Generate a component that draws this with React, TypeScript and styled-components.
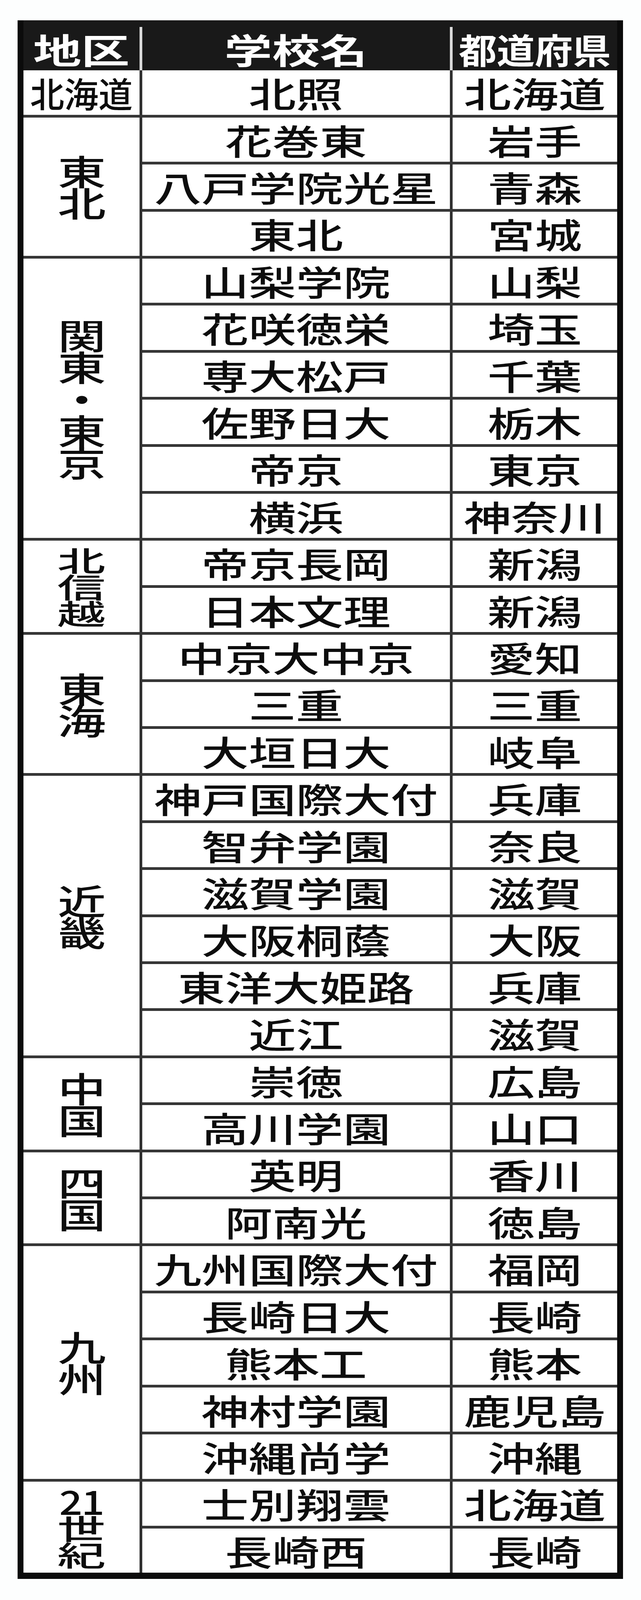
import React from "react";
import styled, { createGlobalStyle } from "styled-components";

const GlobalStyle = createGlobalStyle`
  html, body {
    margin: 0;
    padding: 0;
    background: #fdfefe;
  }
  body {
    font-family: "Noto Sans CJK JP", "Noto Sans", sans-serif;
    color: #0d0d0d;
  }
`;

/* --k is the vertical fit factor: 1 when the window really is 5020px tall,
   smaller when the browser clamps the window height. */
const Page = styled.div`
  width: 1640px;
  height: calc(5020px * var(--k));
  box-sizing: border-box;
  padding: calc(64px * var(--k)) 0 0 45px;
  background: #fdfefe;
  overflow: hidden;
`;

const Table = styled.div`
  width: 1549px;
  box-sizing: border-box;
  border-left: 15px solid #0b0b0b;
  border-right: 15px solid #0b0b0b;
  border-bottom: calc(20px * var(--k)) solid #0b0b0b;
  background: #ffffff;
`;

const Header = styled.div`
  display: grid;
  grid-template-columns: 297px 7px 787px 7px 1fr;
  height: calc(157px * var(--k));
  background: #191919;
`;

const HeaderCell = styled.div`
  display: flex;
  align-items: center;
  justify-content: center;
  padding-top: calc(20px * var(--k));
  color: #ffffff;
  font-weight: 700;
`;

const HeaderDivider = styled.div`
  margin-top: calc(20px * var(--k));
  background: #d9d9d9;
`;

const Text = styled.span<{ $sx: number }>`
  display: inline-block;
  white-space: nowrap;
  font-size: calc(108px * var(--k));
  line-height: 1.2;
  transform: scaleX(calc(${(p) => p.$sx} / var(--k)));
`;

const Region = styled.div<{ $last?: boolean }>`
  display: grid;
  grid-template-columns: 297px 7px 1fr;
  border-bottom: ${(p) =>
    p.$last ? "none" : "calc(9px * var(--k)) solid #363636"};
`;

const RegionCell = styled.div`
  display: flex;
  flex-direction: column;
  align-items: center;
  justify-content: center;
  min-height: 0;
  font-weight: 500;
`;

const VDivider = styled.div`
  background: #303030;
`;

const Rows = styled.div`
  display: flex;
  flex-direction: column;
`;

const Row = styled.div`
  display: grid;
  grid-template-columns: 787px 7px 1fr;
  height: calc(139px * var(--k));
  & + & {
    border-top: calc(9px * var(--k)) solid #363636;
  }
`;

const Cell = styled.div`
  display: flex;
  align-items: center;
  justify-content: center;
  font-weight: 500;
`;

const VLabel = styled.div<{ $squeeze?: boolean }>`
  writing-mode: vertical-rl;
  text-orientation: upright;
  white-space: nowrap;
  font-size: calc(${(p) => (p.$squeeze ? 88 : 108)}px * var(--k));
  line-height: 1.2;
  letter-spacing: calc(${(p) => (p.$squeeze ? -5 : -8)}px * var(--k));
  transform: scaleX(calc(${(p) => (p.$squeeze ? 1.4 : 1.14)} / var(--k)));
`;

const Digits = styled.div`
  font-size: calc(104px * var(--k));
  line-height: 0.86;
  letter-spacing: -2px;
  white-space: nowrap;
  transform: scaleX(calc(1 / var(--k)));
`;

type Entry = [string, string];
type RegionData = {
  label: string;
  digits?: string;
  horizontal?: boolean;
  squeeze?: boolean;
  rows: Entry[];
};

const regions: RegionData[] = [
  { label: "北海道", horizontal: true, rows: [["北照", "北海道"]] },
  {
    label: "東北",
    rows: [
      ["花巻東", "岩手"],
      ["八戸学院光星", "青森"],
      ["東北", "宮城"],
    ],
  },
  {
    label: "関東・東京",
    rows: [
      ["山梨学院", "山梨"],
      ["花咲徳栄", "埼玉"],
      ["専大松戸", "千葉"],
      ["佐野日大", "栃木"],
      ["帝京", "東京"],
      ["横浜", "神奈川"],
    ],
  },
  {
    label: "北信越",
    squeeze: true,
    rows: [
      ["帝京長岡", "新潟"],
      ["日本文理", "新潟"],
    ],
  },
  {
    label: "東海",
    rows: [
      ["中京大中京", "愛知"],
      ["三重", "三重"],
      ["大垣日大", "岐阜"],
    ],
  },
  {
    label: "近畿",
    rows: [
      ["神戸国際大付", "兵庫"],
      ["智弁学園", "奈良"],
      ["滋賀学園", "滋賀"],
      ["大阪桐蔭", "大阪"],
      ["東洋大姫路", "兵庫"],
      ["近江", "滋賀"],
    ],
  },
  {
    label: "中国",
    rows: [
      ["崇徳", "広島"],
      ["高川学園", "山口"],
    ],
  },
  {
    label: "四国",
    rows: [
      ["英明", "香川"],
      ["阿南光", "徳島"],
    ],
  },
  {
    label: "九州",
    rows: [
      ["九州国際大付", "福岡"],
      ["長崎日大", "長崎"],
      ["熊本工", "熊本"],
      ["神村学園", "鹿児島"],
      ["沖縄尚学", "沖縄"],
    ],
  },
  {
    label: "世紀",
    digits: "21",
    squeeze: true,
    rows: [
      ["士別翔雲", "北海道"],
      ["長崎西", "長崎"],
    ],
  },
];

function fitFactor(): number {
  if (typeof window === "undefined") return 1;
  const h = window.innerHeight || 5020;
  return Math.min(1, h / 5020);
}

export default function App() {
  const k = fitFactor();
  return (
    <>
      <GlobalStyle />
      <Page style={{ ["--k" as string]: k } as React.CSSProperties}>
        <Table>
          <Header>
            <HeaderCell>
              <Text $sx={1.14}>地区</Text>
            </HeaderCell>
            <HeaderDivider />
            <HeaderCell>
              <Text $sx={1.13}>学校名</Text>
            </HeaderCell>
            <HeaderDivider />
            <HeaderCell>
              <Text $sx={0.9}>都道府県</Text>
            </HeaderCell>
          </Header>
          {regions.map((r, i) => (
            <Region key={i} $last={i === regions.length - 1}>
              <RegionCell>
                {r.horizontal ? (
                  <Text $sx={0.81}>{r.label}</Text>
                ) : (
                  <>
                    {r.digits ? <Digits>{r.digits}</Digits> : null}
                    <VLabel $squeeze={r.squeeze}>{r.label}</VLabel>
                  </>
                )}
              </RegionCell>
              <VDivider />
              <Rows>
                {r.rows.map(([school, pref], j) => (
                  <Row key={j}>
                    <Cell>
                      <Text $sx={1.12}>{school}</Text>
                    </Cell>
                    <VDivider />
                    <Cell>
                      <Text $sx={1.12}>{pref}</Text>
                    </Cell>
                  </Row>
                ))}
              </Rows>
            </Region>
          ))}
        </Table>
      </Page>
    </>
  );
}
